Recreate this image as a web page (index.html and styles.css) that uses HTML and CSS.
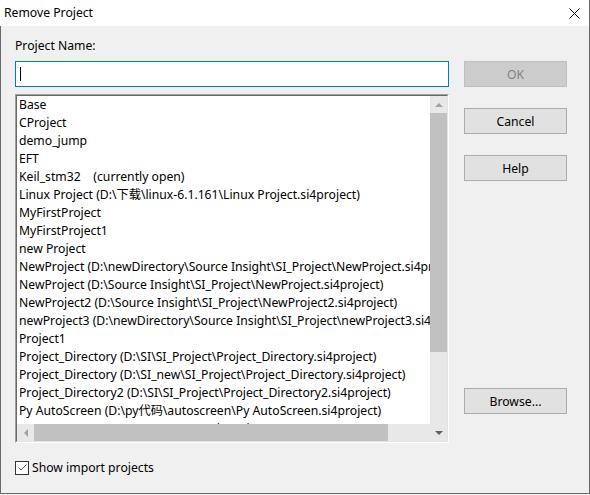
FILE: index.html
```html
<!DOCTYPE html>
<html lang="en">
<head>
  <meta charset="UTF-8" />
  <title>Remove Project</title>
  <link rel="stylesheet" href="styles.css">
</head>
<body>

  <div class="window">
    <div class="titlebar">
      <span class="title">Remove Project</span>
      <svg class="close" width="11" height="11" viewBox="0 0 11 11">
        <path d="M0.5 0.5 L10.5 10.5 M10.5 0.5 L0.5 10.5" stroke="#000" stroke-width="1" fill="none" />
      </svg>
    </div>

    <div class="dialog">
      <div class="main">
        <div class="field-label">Project Name:</div>
        <div class="name-input"><span class="caret"></span></div>

        <div class="listbox">
          <div class="listbox-inner">
            <div class="list-view">
              <ul class="items">
                <li>Base</li>
                <li>CProject</li>
                <li>demo_jump</li>
                <li>EFT</li>
                <li>Keil_stm32&nbsp;&nbsp;&nbsp; (currently open)</li>
                <li>Linux Project (D:\下载\linux-6.1.161\Linux Project.si4project)</li>
                <li>MyFirstProject</li>
                <li>MyFirstProject1</li>
                <li>new Project</li>
                <li>NewProject (D:\newDirectory\Source Insight\SI_Project\NewProject.si4project)</li>
                <li>NewProject (D:\Source Insight\SI_Project\NewProject.si4project)</li>
                <li>NewProject2 (D:\Source Insight\SI_Project\NewProject2.si4project)</li>
                <li>newProject3 (D:\newDirectory\Source Insight\SI_Project\newProject3.si4project)</li>
                <li>Project1</li>
                <li>Project_Directory (D:\SI\SI_Project\Project_Directory.si4project)</li>
                <li>Project_Directory (D:\SI_new\SI_Project\Project_Directory.si4project)</li>
                <li>Project_Directory2 (D:\SI\SI_Project\Project_Directory2.si4project)</li>
                <li>Py AutoScreen (D:\py代码\autoscreen\Py AutoScreen.si4project)</li>
                <li>stm32_test (D:\stm32\stm32_test.si4project)</li>
              </ul>
              <div class="hscroll">
                <div class="arrow-btn"><span class="tri tri-left"></span></div>
                <div class="hthumb"></div>
                <div class="track"></div>
              </div>
            </div>
            <div class="vscroll">
              <div class="arrow-btn"><span class="tri tri-up"></span></div>
              <div class="vthumb"></div>
              <div class="track"></div>
              <div class="arrow-btn"><span class="tri tri-down"></span></div>
            </div>
          </div>
        </div>

        <div class="check-row">
          <span class="checkbox">
            <svg width="11" height="11" viewBox="0 0 11 11">
              <path d="M1.5 5.5 L4 8 L9.5 2.5" stroke="#555" stroke-width="1" fill="none" />
            </svg>
          </span>
          <span>Show import projects</span>
        </div>
      </div>

      <div class="buttons">
        <button class="btn btn-ok" disabled>OK</button>
        <button class="btn btn-cancel">Cancel</button>
        <button class="btn btn-help">Help</button>
        <button class="btn btn-browse">Browse...</button>
      </div>
    </div>
  </div>

</body>
</html>
```

FILE: styles.css
```css
* {
  box-sizing: border-box;
}

body {
  margin: 0;
  padding: 0;
  font-family: "Noto Sans", "Noto Sans CJK SC", sans-serif;
  font-size: 12.2px;
  color: #000;
  background: #f0f0f0;
}

.window {
  width: 590px;
  height: 494px;
  background: #f0f0f0;
  border-left: 1px solid #6b6b6b;
  border-right: 1px solid #6b6b6b;
  border-bottom: 1px solid #6b6b6b;
  display: flex;
  flex-direction: column;
}

.titlebar {
  height: 26px;
  background: #fff;
  display: flex;
  align-items: center;
  justify-content: space-between;
  padding-left: 3px;
  padding-right: 9px;
  margin-left: -1px;
}

.title {
  padding-left: 1px;
  line-height: 26px;
}

.close {
  display: block;
}

.dialog {
  flex: 1;
  display: flex;
  padding-left: 14px;
  gap: 15px;
}

.main {
  width: 434px;
  display: flex;
  flex-direction: column;
  padding-top: 12px;
}

.field-label {
  line-height: 16px;
  height: 16px;
}

.name-input {
  margin-top: 7px;
  height: 26px;
  background: #fff;
  border: 1px solid #0078d7;
  padding: 5px 0 0 4px;
}

.caret {
  display: block;
  width: 1px;
  height: 14px;
  background: #000;
}

/* sunken 3d frame, two pixels deep */
.listbox {
  margin-top: 7px;
  height: 349px;
  border: 1px solid;
  border-color: #a0a0a0 #fff #fff #a0a0a0;
}

.listbox-inner {
  height: 100%;
  border: 1px solid;
  border-color: #696969 #e3e3e3 #e3e3e3 #696969;
  background: #fff;
  display: flex;
}

.list-view {
  flex: 1;
  min-width: 0;
  display: flex;
  flex-direction: column;
}

.items {
  flex: 1;
  margin: 0;
  padding: 0 0 0 2px;
  list-style: none;
  overflow: hidden;
  white-space: nowrap;
}

.items li {
  height: 18px;
  line-height: 18px;
}

.hscroll {
  height: 17px;
  display: flex;
  background: #e8e8e8;
}

.vscroll {
  width: 17px;
  display: flex;
  flex-direction: column;
  background: #e8e8e8;
}

.arrow-btn {
  width: 17px;
  height: 17px;
  flex: none;
  display: flex;
  align-items: center;
  justify-content: center;
}

.track {
  flex: 1;
}

.hthumb {
  width: 354px;
  background: #c1c1c1;
}

.vthumb {
  height: 239px;
  background: #c1c1c1;
}

.tri {
  width: 0;
  height: 0;
  border-style: solid;
}

.tri-up {
  border-width: 0 4px 4px 4px;
  border-color: transparent transparent #a3a3a3 transparent;
}

.tri-down {
  border-width: 4px 4px 0 4px;
  border-color: #606060 transparent transparent transparent;
}

.tri-left {
  border-width: 4px 4px 4px 0;
  border-color: transparent #a3a3a3 transparent transparent;
}

.check-row {
  margin-top: 16px;
  height: 17px;
  display: flex;
  align-items: center;
  gap: 3px;
}

.checkbox {
  width: 14px;
  height: 14px;
  border: 1px solid #333;
  background: #fff;
  display: flex;
  align-items: center;
  justify-content: center;
}

.checkbox svg {
  display: block;
}

.buttons {
  width: 103px;
  display: flex;
  flex-direction: column;
  padding-top: 35px;
}

.btn {
  height: 26px;
  width: 103px;
  font-family: inherit;
  font-size: 12.2px;
  color: #000;
  background: #e1e1e1;
  border: 1px solid #adadad;
  padding: 0;
}

.btn-ok {
  background: #cccccc;
  border-color: #bfbfbf;
  color: #838383;
}

.btn-cancel,
.btn-help {
  margin-top: 21px;
}

.btn-browse {
  margin-top: 207px;
}
```
